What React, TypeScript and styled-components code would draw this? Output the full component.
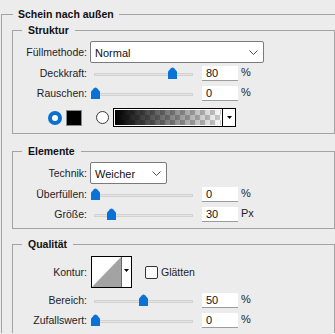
import React from "react";
import styled, { createGlobalStyle } from "styled-components";

const GlobalStyle = createGlobalStyle`
  html, body {
    margin: 0;
    padding: 0;
    background: #ececec;
    overflow: hidden;
  }
  body {
    font-family: "Liberation Sans", Arial, sans-serif;
    font-size: 10.5px;
    color: #1c1c28;
  }
`;

// the outer group runs past the right and bottom edge, so those borders never show
const Outer = styled.fieldset`
  margin: 7px 0 0 1px;
  padding: 0;
  width: 334px;
  box-sizing: border-box;
  border: 1px solid #a3a3a3;
  border-right: none;
  border-bottom: none;
  min-inline-size: 0;
`;

const Legend = styled.legend<{ $inset: number; $pad: number }>`
  margin-left: ${(p) => p.$inset}px;
  padding: 0 ${(p) => p.$pad}px;
  font-weight: bold;
  font-size: 10.5px;
  line-height: 14px;
  color: #111;
`;

const Group = styled.fieldset<{ $top: number; $padTop: number; $padBottom: number; $open?: boolean }>`
  margin: ${(p) => p.$top}px 0 0 10px;
  padding: ${(p) => p.$padTop}px 0 ${(p) => p.$padBottom}px 0;
  width: 323px;
  box-sizing: border-box;
  border: 1px solid #a3a3a3;
  border-bottom: ${(p) => (p.$open ? "none" : "1px solid #a3a3a3")};
  min-inline-size: 0;
`;

const Row = styled.div<{ $h: number; $mt?: number }>`
  display: flex;
  align-items: center;
  height: ${(p) => p.$h}px;
  margin-top: ${(p) => p.$mt ?? 0}px;
`;

const Label = styled.span`
  flex: none;
  width: 74px;
  margin-right: 3px;
  text-align: right;
  white-space: nowrap;
`;

const Select = styled.div<{ $w: number }>`
  flex: none;
  width: ${(p) => p.$w}px;
  height: 22px;
  box-sizing: border-box;
  background: #fff;
  border: 1px solid #7a7a7a;
  border-radius: 2px;
  display: flex;
  align-items: center;
  justify-content: space-between;
  padding: 1px 5px 0 4px;
  font-size: 11px;
  color: #111;
`;

const Slider = styled.div`
  position: relative;
  flex: none;
  width: 107px;
  height: 12px;
  margin-right: 5px;
`;

const Track = styled.div`
  position: absolute;
  left: 4px;
  right: 4px;
  top: 6px;
  height: 3px;
  box-sizing: border-box;
  background: #e4e4e4;
  border: 1px solid #d2d2d2;
`;

const Thumb = styled.svg`
  position: absolute;
  top: 0;
  width: 9px;
  height: 12px;
`;

const NumBox = styled.div`
  flex: none;
  width: 36px;
  height: 15px;
  box-sizing: border-box;
  background: #fff;
  border-bottom: 1px solid #9c9c9c;
  padding: 1px 0 0 4px;
  line-height: 13px;
  font-size: 11px;
  color: #111;
`;

const Unit = styled.span`
  margin-left: 3px;
  margin-top: -3px;
  font-size: 11px;
`;

const SwatchRow = styled.div`
  display: flex;
  align-items: center;
  height: 19px;
  margin-top: 5px;
  padding-left: 35px;
`;

const Radio = styled.span<{ $on?: boolean }>`
  flex: none;
  width: ${(p) => (p.$on ? 14 : 13)}px;
  height: ${(p) => (p.$on ? 14 : 13)}px;
  border-radius: 50%;
  box-sizing: border-box;
  background: #fff;
  border: ${(p) => (p.$on ? "4px solid #0b6fcf" : "1px solid #3a3a3a")};
`;

const Swatch = styled.span`
  flex: none;
  width: 16px;
  height: 16px;
  margin: 0 14px 0 4px;
  box-sizing: border-box;
  background: #000;
  border: 1px solid #8a8a8a;
`;

const GradientBox = styled.div`
  flex: none;
  display: flex;
  width: 123px;
  height: 19px;
  margin-left: 4px;
  box-sizing: border-box;
  border: 1px solid #000;
  background: #fff;
`;

const GradientFill = styled.div`
  flex: 1;
  border: 1px solid #fff;
  background-image: linear-gradient(to right, #000, rgba(0, 0, 0, 0)),
    conic-gradient(#c9c9c9 25%, #fafafa 0 50%, #c9c9c9 0 75%, #fafafa 0);
  background-size: 100% 100%, 10px 10px;
`;

const DropPart = styled.div`
  flex: none;
  width: 12px;
  border-left: 1px solid #000;
  display: flex;
  align-items: center;
  justify-content: center;
  background: #fff;
`;

const ContourBox = styled.div`
  flex: none;
  display: flex;
  width: 41px;
  height: 32px;
  margin-left: 1px;
  box-sizing: border-box;
  border: 1px solid #000;
  background: #fff;
`;

const ContourPreview = styled.svg`
  flex: none;
  width: 29px;
  height: 30px;
  border-right: 1px solid #6a6a6a;
`;

const ContourDrop = styled.div`
  flex: 1;
  display: flex;
  justify-content: center;
  padding-top: 12px;
`;

const Check = styled.span`
  flex: none;
  width: 13px;
  height: 13px;
  margin: 0 3px 0 13px;
  box-sizing: border-box;
  border: 1px solid #333;
  border-radius: 2px;
  background: #fbfbfb;
`;

const Chevron = () => (
  <svg width="9" height="5" viewBox="0 0 9 5">
    <polyline points="0.5,0.5 4.5,4.5 8.5,0.5" fill="none" stroke="#555" strokeWidth="1" />
  </svg>
);

const DownTri = () => (
  <svg width="5" height="3" viewBox="0 0 5 3">
    <polygon points="0,0 5,0 2.5,3" fill="#000" />
  </svg>
);

const thumbPath = "M0 12 V4.5 L3 1.2 Q4.5 0 6 1.2 L9 4.5 V12 Z";

function SliderRow({
  label,
  value,
  pos,
  unit,
  mt,
}: {
  label: string;
  value: string;
  pos: number;
  unit: string;
  mt?: number;
}) {
  return (
    <Row $h={20} $mt={mt}>
      <Label>{label}</Label>
      <Slider>
        <Track />
        <Thumb viewBox="0 0 9 12" style={{ left: 1 + Math.round(pos * 96) }}>
          <path d={thumbPath} fill="#0a72d6" />
        </Thumb>
      </Slider>
      <NumBox>{value}</NumBox>
      <Unit>{unit}</Unit>
    </Row>
  );
}

export default function App() {
  return (
    <>
      <GlobalStyle />
      <Outer>
        <Legend $inset={11} $pad={5}>
          Schein nach außen
        </Legend>
        <Group $top={2} $padTop={4} $padBottom={6}>
          <Legend $inset={9} $pad={6}>
            Struktur
          </Legend>
          <Row $h={22}>
            <Label>Füllmethode:</Label>
            <Select $w={174}>
              <span>Normal</span>
              <Chevron />
            </Select>
          </Row>
          <SliderRow label="Deckkraft:" value="80" pos={0.8} unit="%" />
          <SliderRow label="Rauschen:" value="0" pos={0} unit="%" />
          <SwatchRow>
            <Radio $on />
            <Swatch />
            <Radio />
            <GradientBox>
              <GradientFill />
              <DropPart>
                <DownTri />
              </DropPart>
            </GradientBox>
          </SwatchRow>
        </Group>
        <Group $top={10} $padTop={4} $padBottom={4}>
          <Legend $inset={9} $pad={6}>
            Elemente
          </Legend>
          <Row $h={22}>
            <Label>Technik:</Label>
            <Select $w={77}>
              <span>Weicher</span>
              <Chevron />
            </Select>
          </Row>
          <SliderRow label="Überfüllen:" value="0" pos={0} unit="%" />
          <SliderRow label="Größe:" value="30" pos={0.165} unit="Px" />
        </Group>
        <Group $top={8} $padTop={5} $padBottom={3} $open>
          <Legend $inset={9} $pad={6}>
            Qualität
          </Legend>
          <Row $h={32}>
            <Label>Kontur:</Label>
            <ContourBox>
              <ContourPreview viewBox="0 0 29 30">
                <polygon points="0,30 29,0 29,30" fill="#a3a3a3" />
              </ContourPreview>
              <ContourDrop>
                <DownTri />
              </ContourDrop>
            </ContourBox>
            <Check />
            <span>Glätten</span>
          </Row>
          <SliderRow label="Bereich:" value="50" pos={0.5} unit="%" mt={2} />
          <SliderRow label="Zufallswert:" value="0" pos={0} unit="%" />
        </Group>
      </Outer>
    </>
  );
}
